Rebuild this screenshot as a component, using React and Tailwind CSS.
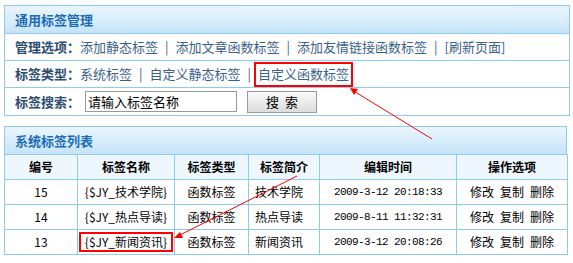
import React from "react";

const rows = [
  { id: 15, name: "{$JY_技术学院}", type: "函数标签", intro: "技术学院", time: "2009-3-12 20:18:33" },
  { id: 14, name: "{$JY_热点导读}", type: "函数标签", intro: "热点导读", time: "2009-8-11 11:32:31" },
  { id: 13, name: "{$JY_新闻资讯}", type: "函数标签", intro: "新闻资讯", time: "2009-3-12 20:08:26", marked: true },
];

const Sep = () => <span className="mx-[7px] text-[#3b5f8a]">|</span>;

const Link = ({ children }) => <a className="text-[#3b5f8a] cursor-pointer">{children}</a>;

const Header = ({ children }) => (
  <div className="h-[28px] flex items-center pl-[10px] bg-gradient-to-b from-[#e9f5fe] via-[#d9eefc] to-[#c4e3f8] border-b border-[#8ecbf3] text-[#1b6cb8] font-bold text-[13px]">
    {children}
  </div>
);

export default function App() {
  const th = "border border-[#8ecbf3] font-bold text-black h-[25px]";
  const td = "border border-[#8ecbf3] text-black h-[25px] text-center";
  return (
    <div
      className="relative w-[573px] h-[263px] bg-white text-[12px] overflow-hidden"
      style={{ fontFamily: '"Noto Sans CJK SC", "Liberation Sans", sans-serif' }}
    >
      <div className="pt-[5px] pl-[4px]">
        <div className="w-[566px] border border-[#8ecbf3] text-[13px]">
          <Header>通用标签管理</Header>
          <div className="h-[27px] flex items-center pl-[10px] border-b border-[#8ecbf3]">
            <span className="font-bold text-[#2c4c70]">管理选项：</span>
            <Link>添加静态标签</Link>
            <Sep />
            <Link>添加文章函数标签</Link>
            <Sep />
            <Link>添加友情链接函数标签</Link>
            <Sep />
            <Link>[刷新页面]</Link>
          </div>
          <div className="h-[27px] flex items-center pl-[10px] border-b border-[#8ecbf3]">
            <span className="font-bold text-[#2c4c70]">标签类型：</span>
            <Link>系统标签</Link>
            <Sep />
            <Link>自定义静态标签</Link>
            <Sep />
            <span className="-ml-[4px] border-2 border-[#ff0000] px-[2px] h-[25px] flex items-center">
              <Link>自定义函数标签</Link>
            </span>
          </div>
          <div className="h-[27px] flex items-center pl-[10px]">
            <span className="font-bold text-[#2c4c70] w-[70px]">标签搜索：</span>
            <input
              readOnly
              value="请输入标签名称"
              className="w-[152px] h-[21px] border border-[#999] px-[2px] text-[13px] text-black outline-none"
            />
            <button className="ml-[10px] w-[70px] h-[22px] border border-[#999] bg-gradient-to-b from-[#fbfbfb] to-[#dcdcdc] text-black text-[13px] tracking-[6px] pl-[6px]">
              搜索
            </button>
          </div>
        </div>
      </div>

      <div className="pt-[10px] pl-[4px]">
        <div className="w-[563px] border border-[#8ecbf3] border-b-0">
          <Header>系统标签列表</Header>
        </div>
        <table className="w-[563px] border-collapse -mt-[1px] table-fixed">
          <colgroup>
            <col className="w-[73px]" />
            <col className="w-[97px]" />
            <col className="w-[74px]" />
            <col className="w-[71px]" />
            <col className="w-[137px]" />
            <col className="w-[111px]" />
          </colgroup>
          <thead>
            <tr className="bg-[#eef6fe]">
              <th className={th}>编号</th>
              <th className={th}>标签名称</th>
              <th className={th}>标签类型</th>
              <th className={th}>标签简介</th>
              <th className={th}>编辑时间</th>
              <th className={th}>操作选项</th>
            </tr>
          </thead>
          <tbody>
            {rows.map((r) => (
              <tr key={r.id}>
                <td className={td}>{r.id}</td>
                <td className={td}>
                  {r.marked ? (
                    <span className="inline-flex items-center border-2 border-[#ff0000] px-[4px] h-[20px]">{r.name}</span>
                  ) : (
                    r.name
                  )}
                </td>
                <td className={td}>{r.type}</td>
                <td className={`${td} text-left pl-[6px]`}>{r.intro}</td>
                <td className={`${td} text-[11px] tracking-[-0.6px]`} style={{ fontFamily: '"Liberation Mono", monospace' }}>{r.time}</td>
                <td className={td}>
                  <span className="mr-[6px]">修改</span>
                  <span className="mr-[6px]">复制</span>
                  <span>删除</span>
                </td>
              </tr>
            ))}
          </tbody>
        </table>
      </div>

      <svg className="absolute inset-0 pointer-events-none" width="573" height="263">
        <line x1="432" y1="139" x2="352" y2="90" stroke="#ff0000" strokeWidth="1" />
        <polygon points="350,88 358,89 354,95" fill="#ff0000" />
        <line x1="297" y1="176" x2="178" y2="236" stroke="#ff0000" strokeWidth="1" />
        <polygon points="174,238 180,232 183,238" fill="#ff0000" />
      </svg>
    </div>
  );
}
